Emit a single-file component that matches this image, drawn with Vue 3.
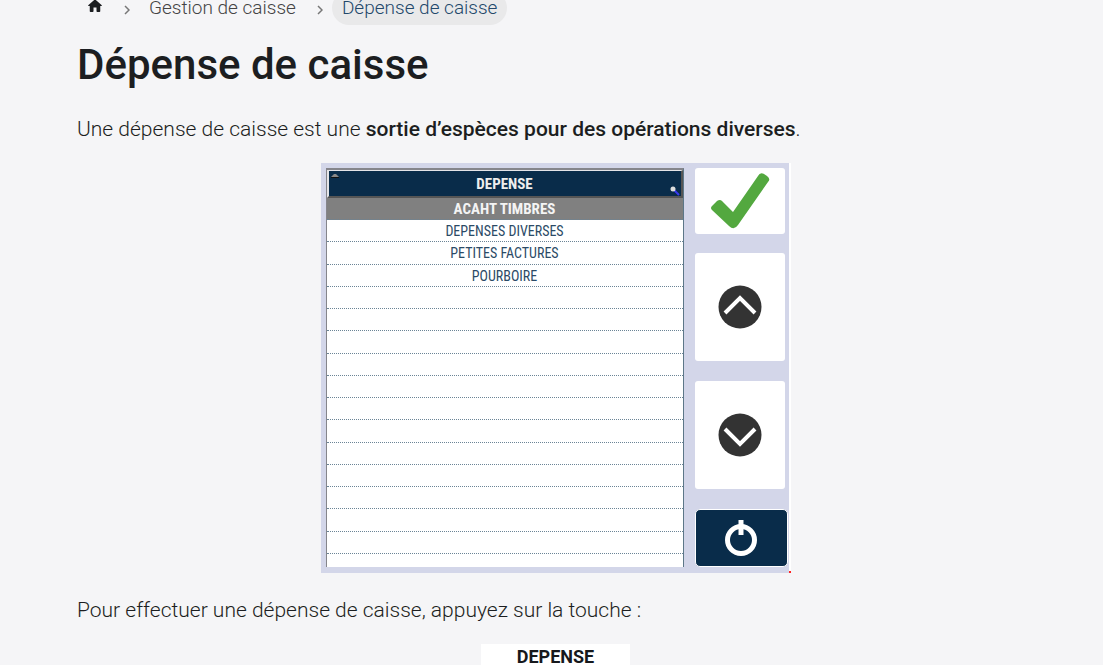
<script setup>
const expenses = ['ACAHT TIMBRES', 'DEPENSES DIVERSES', 'PETITES FACTURES', 'POURBOIRE']
const rows = [...expenses, ...Array(13).fill('')]
</script>

<template>
  <main class="page">
    <nav class="crumbs" aria-label="Fil d'Ariane">
      <a href="#" class="home" aria-label="Accueil">
        <svg viewBox="0 0 24 24" width="18" height="18"><path fill="currentColor" d="M10 19v-5h4v5c0 .55.45 1 1 1h3c.55 0 1-.45 1-1v-7h1.700c.46 0 .68-.57.33-.87L12.670 3.600c-.38-.34-.96-.34-1.340 0l-8.360 7.530c-.34.3-.13.87.33.87H5v7c0 .55.45 1 1 1h3c.55 0 1-.45 1-1z" /></svg>
      </a>
      <svg class="sep" viewBox="0 0 6 10" width="6" height="10"><path d="M1 1l4 4-4 4" /></svg>
      <a href="#" class="crumb">Gestion de caisse</a>
      <svg class="sep" viewBox="0 0 6 10" width="6" height="10"><path d="M1 1l4 4-4 4" /></svg>
      <a href="#" class="crumb current" aria-current="page">Dépense de caisse</a>
    </nav>

    <h1>Dépense de caisse</h1>
    <p>Une dépense de caisse est une <strong>sortie d’espèces pour des opérations diverses</strong>.</p>

    <section class="register">
      <div class="frame">
        <table>
          <thead>
            <tr>
              <th>
                <svg class="sort" viewBox="0 0 8 5" width="8" height="5"><path d="M0 4L3 1h2l3 3z" fill="#888" /><path d="M0 4h8v1H0z" fill="#111" /></svg>
                DEPENSE
                <svg class="search" viewBox="0 0 10 10" width="10" height="10"><path d="M4 4l5 5" stroke="#3a3af0" stroke-width="2" /><circle cx="3" cy="3" r="2.500" fill="#ddd" /></svg>
              </th>
            </tr>
          </thead>
          <tbody>
            <tr v-for="(row, i) in rows" :key="i" :class="{ selected: i === 0 }">
              <td>{{ row }}</td>
            </tr>
          </tbody>
        </table>
      </div>
      <div class="keys">
        <button type="button" class="ok" aria-label="Valider">
          <svg viewBox="0 0 90 66" width="90" height="66"><path d="M17 38l5-5q3-2 5 0l11 11L63 8q2-4 6-2l3 2q4 3 1 6L43 57q-4 6-9 1L17 42q-2-2 0-4z" fill="#53a83f" /></svg>
        </button>
        <button type="button" class="arrow" aria-label="Monter">
          <svg viewBox="0 0 44 44" width="44" height="44"><circle cx="22" cy="22" r="21.500" fill="#333" /><path d="M7 28l15-15 15 15" fill="none" stroke="#fff" stroke-width="4" /></svg>
        </button>
        <button type="button" class="arrow" aria-label="Descendre">
          <svg viewBox="0 0 44 44" width="44" height="44"><circle cx="22" cy="22" r="21.500" fill="#333" /><path d="M7 16l15 15 15-15" fill="none" stroke="#fff" stroke-width="4" /></svg>
        </button>
        <button type="button" class="power" aria-label="Quitter">
          <svg viewBox="0 0 34 38" width="34" height="38"><circle cx="17" cy="21" r="13.500" fill="none" stroke="#fff" stroke-width="5" /><path d="M17 1v15" stroke="#fff" stroke-width="5" /></svg>
        </button>
      </div>
      <span class="dot"></span>
    </section>

    <p>Pour effectuer une dépense de caisse, appuyez sur la touche :</p>
    <button type="button" class="touch">DEPENSE</button>
  </main>
</template>

<style>
html { overflow: hidden; }
body { margin: 0; background: #f5f5f7; }
</style>

<style scoped>
.page {
  height: 100vh;
  overflow: hidden;
  box-sizing: border-box;
  padding: 0 69px 0 77px;
  color: #1c1e21;
  font: 300 21px/32px Roboto, "Open Sans", sans-serif;
}
.crumbs {
  display: flex;
  align-items: center;
  height: 34px;
  margin-top: -9px;
  font-size: 19px;
}
.home { display: flex; margin: 0 20px 5px 9px; color: #1c1e21; }
.sep { fill: none; stroke: #777; stroke-width: 1.500; margin-top: 4px; }
.crumb {
  padding: 0 10px;
  margin-left: 9px;
  line-height: 34px;
  color: #444;
  text-decoration: none;
}
.crumb + .sep { margin-left: 11px; }
.current { background: #e9e9ea; border-radius: 17px; color: #23486b; }
h1 {
  margin: 15px 0 23px;
  font-size: 42px;
  line-height: 50px;
  font-weight: 500;
}
p { margin: 0; }
strong { font-weight: 500; }
.register {
  position: relative;
  display: flex;
  justify-content: space-between;
  box-sizing: border-box;
  max-width: 470px;
  height: 410px;
  margin: 18px auto 21px;
  padding: 5px 0 5px 5px;
  background: #d3d6e9;
  border-right: 2px solid #fff;
}
.frame {
  flex: 1;
  box-sizing: border-box;
  height: 399px;
  overflow: hidden;
  border: 1px solid #85858b;
  border-width: 2px 1px 0;
  border-right-color: #5d7788;
  background: #fff;
}
table {
  width: 100%;
  border-spacing: 0;
  font: 400 14px/20px "Roboto Condensed", "Liberation Sans Narrow", Roboto, sans-serif;
}
th {
  position: relative;
  height: 25px;
  padding: 0;
  background: #092c4a;
  border: solid #555;
  border-width: 1px 2px 2px;
  border-top-color: #e4e4e8;
  border-left-color: #e4e4e8;
  color: #eee;
  font-size: 15px;
  font-weight: 700;
}
.sort { position: absolute; left: 2px; top: 2px; }
.search { position: absolute; right: 1px; bottom: 0; }
td {
  height: 21px;
  padding: 0;
  border-bottom: 1px dotted #6b8496;
  color: #2b4a66;
  text-align: center;
}
tr:nth-child(4n + 3) td { height: 22px; }
.selected td { background: #808080; color: #f4f4f4; font-size: 15px; font-weight: 700; }
.keys {
  display: flex;
  flex-direction: column;
  width: 94px;
  margin-left: 11px;
}
.keys button {
  display: grid;
  place-items: center;
  width: 90px;
  margin: 0 0 20px;
  padding: 0;
  border: 0;
  border-radius: 3px;
  background: #fff;
}
.keys .ok { height: 66px; margin-bottom: 19px; }
.keys .arrow { height: 108px; }
.keys .power {
  width: 93px;
  height: 58px;
  margin: 0;
  border: 1px solid #fff;
  border-radius: 5px;
  background: #092c4a;
}
.dot { position: absolute; right: -2px; bottom: 0; width: 2px; height: 2px; background: #f22; }
.touch {
  display: flex;
  justify-content: center;
  width: 149px;
  height: 60px;
  margin: 18px auto 0;
  padding: 2px 0 0;
  border: 0;
  background: #fff;
  color: #16181c;
  font: 700 18px/21px Roboto, sans-serif;
}
</style>
